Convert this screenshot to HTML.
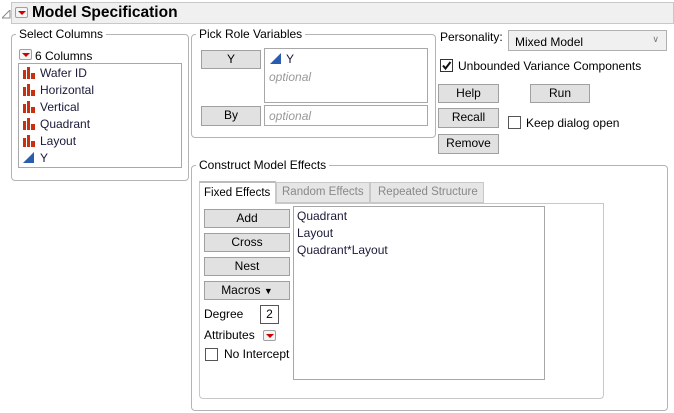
<!DOCTYPE html>
<html><head><style>
*{box-sizing:border-box}
body{margin:0;width:674px;height:413px;background:#fff;font-family:"Liberation Sans",sans-serif;font-size:12px;color:#000;position:relative;overflow:hidden}
.a{position:absolute;white-space:nowrap}
.grp{position:absolute;border:1px solid #b4b4b4;border-radius:4px}
.lbl{position:absolute;background:#fff;padding:0 3px;font-size:12px;line-height:14px}
.btn{position:absolute;background:#e1e1e1;border:1px solid #a0a0a0;text-align:center;font-size:12px;line-height:17px}
.box{position:absolute;background:#fff;border:1px solid #a8a8a8}
.it{position:absolute;font-size:12px;color:#1a1a3a;white-space:nowrap}
.red{position:absolute;width:13px;height:11px;border:1px solid #a0a0a0;border-radius:2px;background:#f4f4f4}
.red:after{content:"";position:absolute;left:2px;top:3px;border-left:4px solid transparent;border-right:4px solid transparent;border-top:4px solid #c00}
.cb{position:absolute;width:13px;height:13px;border:1px solid #333;background:#fff}
.ic{position:absolute;width:12px;height:12px}
.gray{color:#999;font-style:italic}
</style></head><body>
<svg class="a" style="left:2px;top:10px" width="9" height="9"><path d="M8 0 L8 8 L0 8 Z" fill="none" stroke="#888"/></svg>
<div class="a" style="left:11px;top:2px;width:663px;height:22px;background:#f0f0f0;border:1px solid #c8c8c8"></div>
<div class="red" style="left:15px;top:7px"></div>
<div class="a" style="left:32px;top:3px;font-size:15.5px;font-weight:bold;line-height:20px">Model Specification</div>

<div class="grp" style="left:11px;top:34px;width:178px;height:147px"></div>
<div class="lbl" style="left:16px;top:27px">Select Columns</div>
<div class="red" style="left:19px;top:49px"></div>
<div class="a" style="left:35px;top:49px;line-height:14px">6 Columns</div>
<div class="box" style="left:18px;top:63px;width:164px;height:105px"></div>
<svg width="0" height="0" style="position:absolute"><defs><g id="bar"><rect x="0" y="3" width="3" height="9" fill="#c83010"/><rect x="4" y="0" width="3" height="12" fill="#c83010"/><rect x="8" y="6" width="4" height="6" fill="#c83010"/></g></defs></svg>
<svg class="ic" style="left:23px;top:67px"><use href="#bar"/></svg><div class="it" style="left:40px;top:66px">Wafer ID</div>
<svg class="ic" style="left:23px;top:84px"><use href="#bar"/></svg><div class="it" style="left:40px;top:83px">Horizontal</div>
<svg class="ic" style="left:23px;top:101px"><use href="#bar"/></svg><div class="it" style="left:40px;top:100px">Vertical</div>
<svg class="ic" style="left:23px;top:118px"><use href="#bar"/></svg><div class="it" style="left:40px;top:117px">Quadrant</div>
<svg class="ic" style="left:23px;top:135px"><use href="#bar"/></svg><div class="it" style="left:40px;top:134px">Layout</div>
<svg class="ic" style="left:23px;top:152px"><path d="M0 11 L11 0 L11 11 Z" fill="#2a5cb0"/></svg><div class="it" style="left:40px;top:151px">Y</div>

<div class="grp" style="left:191px;top:34px;width:245px;height:104px"></div>
<div class="lbl" style="left:196px;top:27px">Pick Role Variables</div>
<div class="btn" style="left:201px;top:50px;width:60px;height:19px">Y</div>
<div class="box" style="left:264px;top:48px;width:164px;height:55px"></div>
<svg class="ic" style="left:270px;top:53px"><path d="M0 11 L11 0 L11 11 Z" fill="#2a5cb0"/></svg>
<div class="it" style="left:286px;top:52px">Y</div>
<div class="it gray" style="left:269px;top:70px">optional</div>
<div class="btn" style="left:201px;top:106px;width:60px;height:20px">By</div>
<div class="box" style="left:264px;top:105px;width:164px;height:21px"></div>
<div class="it gray" style="left:269px;top:109px">optional</div>

<div class="a" style="left:440px;top:30px">Personality:</div>
<div class="a" style="left:508px;top:30px;width:159px;height:21px;background:#f0f0f0;border:1px solid #b0b0b0;padding:4px 0 0 6px">Mixed Model<span style="position:absolute;right:7px;top:3px;font-size:9px;color:#777">&#8744;</span></div>
<div class="cb" style="left:440px;top:59px"><svg width="11" height="11" style="position:absolute;left:0;top:0"><path d="M2 5.5 L4.5 8.5 L9.5 2" fill="none" stroke="#111" stroke-width="2"/></svg></div>
<div class="a" style="left:458px;top:59px">Unbounded Variance Components</div>
<div class="btn" style="left:438px;top:84px;width:61px;height:19px">Help</div>
<div class="btn" style="left:530px;top:84px;width:60px;height:19px">Run</div>
<div class="btn" style="left:438px;top:108px;width:61px;height:20px">Recall</div>
<div class="cb" style="left:508px;top:116px;border-color:#555"></div>
<div class="a" style="left:526px;top:116px">Keep dialog open</div>
<div class="btn" style="left:438px;top:134px;width:61px;height:20px">Remove</div>

<div class="grp" style="left:191px;top:165px;width:477px;height:246px"></div>
<div class="lbl" style="left:196px;top:158px">Construct Model Effects</div>
<div class="a" style="left:199px;top:203px;width:405px;height:196px;border:1px solid #c8c8c8;border-radius:0 0 4px 4px;background:#fff"></div>
<div class="a" style="left:199px;top:181px;width:77px;height:23px;border:1px solid #c8c8c8;border-bottom:none;border-top:2px solid #bbb;background:#fff;padding:4px 0 0 4px;font-size:11.5px">Fixed Effects</div>
<div class="a" style="left:276px;top:182px;width:94px;height:21px;border:1px solid #c8c8c8;background:#e6e6e6;color:#888;padding:3px 0 0 5px;font-size:11.5px">Random Effects</div>
<div class="a" style="left:370px;top:182px;width:114px;height:21px;border:1px solid #c8c8c8;background:#e6e6e6;color:#888;padding:3px 0 0 7px;font-size:11.5px">Repeated Structure</div>
<div class="btn" style="left:204px;top:209px;width:86px;height:19px">Add</div>
<div class="btn" style="left:204px;top:233px;width:86px;height:19px">Cross</div>
<div class="btn" style="left:204px;top:257px;width:86px;height:19px">Nest</div>
<div class="btn" style="left:204px;top:281px;width:86px;height:19px">Macros <span style="font-size:9px">&#9660;</span></div>
<div class="a" style="left:204px;top:307px">Degree</div>
<div class="box" style="left:260px;top:305px;width:19px;height:19px;border-color:#555;text-align:center;line-height:17px">2</div>
<div class="a" style="left:204px;top:328px">Attributes</div>
<div class="red" style="left:263px;top:330px"></div>
<div class="cb" style="left:205px;top:348px;border-color:#555"></div>
<div class="a" style="left:224px;top:347px">No Intercept</div>
<div class="box" style="left:293px;top:206px;width:252px;height:174px"></div>
<div class="it" style="left:297px;top:209px">Quadrant</div>
<div class="it" style="left:297px;top:226px">Layout</div>
<div class="it" style="left:297px;top:243px">Quadrant*Layout</div>
</body></html>
